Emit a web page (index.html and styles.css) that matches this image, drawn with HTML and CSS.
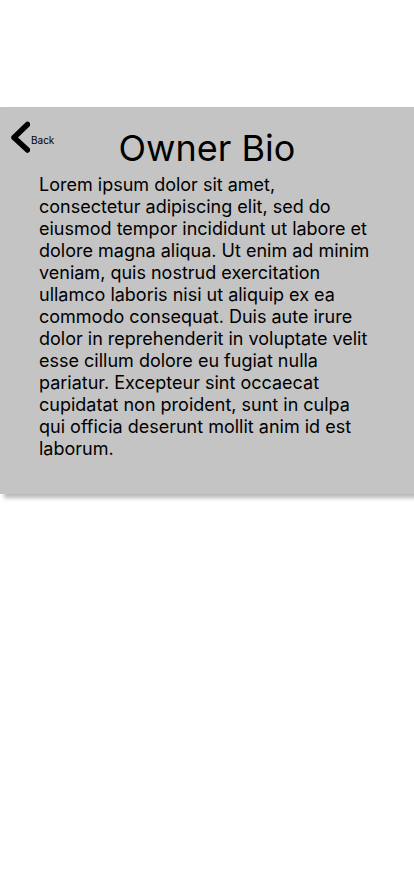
FILE: index.html
```html
<!DOCTYPE html>
<html>
<head>
<meta charset="utf-8">
<link rel="stylesheet" href="styles.css">
</head>
<body>
<main class="page">
<section class="panel">
  <header class="head">
    <a class="back" href="#">
      <svg class="chev" width="22" height="36" viewBox="0 0 22 36"><path d="M19.5 3.5 L6 16.5 L19.5 29" fill="none" stroke="#000" stroke-width="5.5" stroke-linecap="round" stroke-linejoin="round"/></svg>
      <span class="back-label">Back</span>
    </a>
    <h1 class="title">Owner Bio</h1>
    <span></span>
  </header>
  <p class="bio">Lorem ipsum dolor sit amet, consectetur adipiscing elit, sed do eiusmod tempor incididunt ut labore et dolore magna aliqua. Ut enim ad minim veniam, quis nostrud exercitation ullamco laboris nisi ut aliquip ex ea commodo consequat. Duis aute irure dolor in reprehenderit in voluptate velit esse cillum dolore eu fugiat nulla pariatur. Excepteur sint occaecat cupidatat non proident, sunt in culpa qui officia deserunt mollit anim id est laborum.</p>
</section>
</main>
</body>
</html>
```
FILE: styles.css
```css
html, body { margin: 0; padding: 0; background: #fff; }
body { font-family: Inter, "Noto Sans", sans-serif; color: #000; }
.page { padding-top: 107px; min-height: 896px; box-sizing: border-box; }
.panel {
  position: relative;
  height: 387px;
  box-sizing: border-box;
  background: #c4c4c4;
  box-shadow: 4px 4px 4px rgba(0,0,0,0.28);
  padding: 14px 0 0 0;
}
.head {
  display: grid;
  grid-template-columns: 1fr auto 1fr;
  align-items: start;
}
.back {
  display: flex;
  align-items: center;
  text-decoration: none;
  color: #000;
  padding-left: 8px;
  justify-self: start;
}
.chev { display: block; }
.back-label { font-size: 10px; margin-left: 1px; margin-top: 2px; }
.title {
  margin: 5px 0 0 0;
  font-size: 36px;
  font-weight: 400;
  line-height: 44px;
}
.bio {
  margin: 4px 0 0 39px;
  width: 340px;
  font-size: 18px;
  line-height: 22px;
}
```
